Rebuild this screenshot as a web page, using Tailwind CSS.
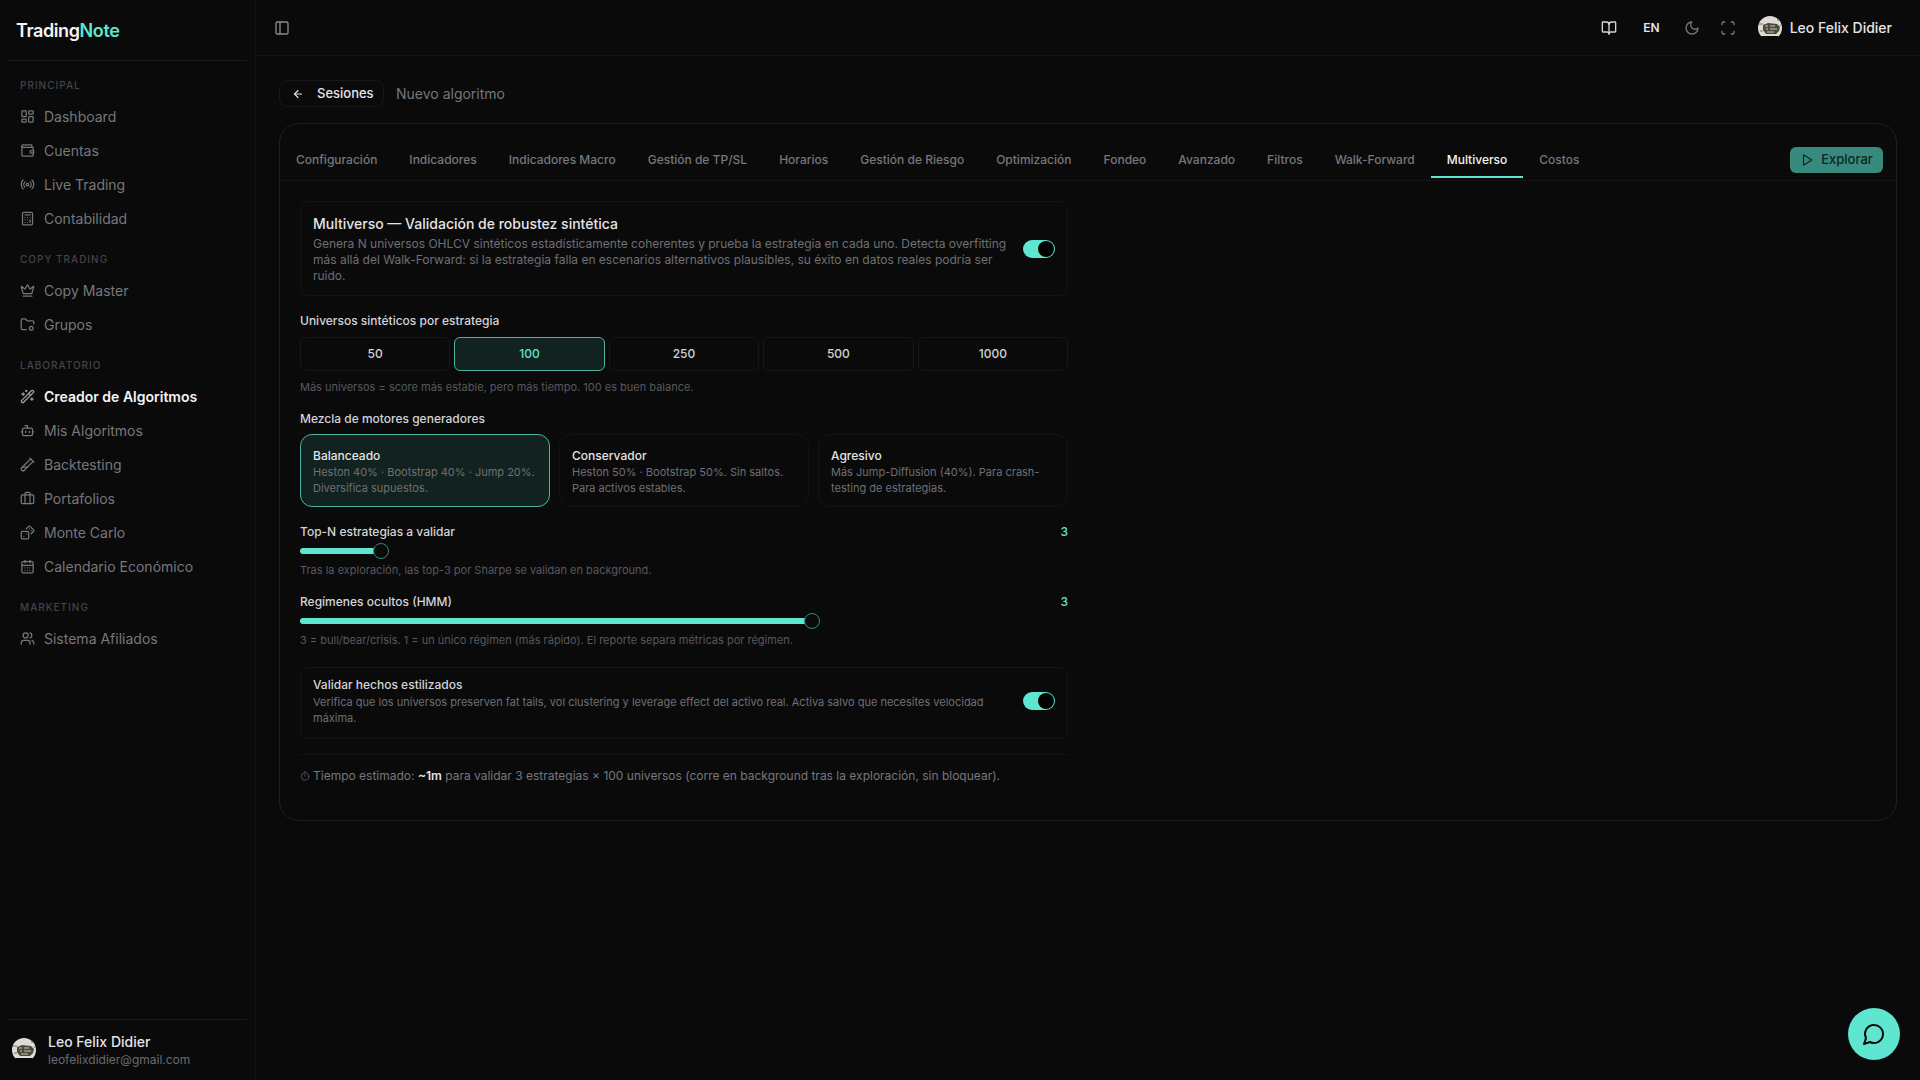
<!DOCTYPE html>
<html lang="es">
<head>
    <meta charset="UTF-8">
    <meta name="viewport" content="width=device-width, initial-scale=1.0">
    <title>TradingNote</title>
    <script src="https://cdn.jsdelivr.net/npm/@tailwindcss/browser@4"></script>
</head>
<body class="bg-[#0a0a0b] text-white font-['Inter',sans-serif] h-screen overflow-hidden flex">
    <!-- Sidebar -->
    <aside class="w-[256px] h-screen shrink-0 border-r border-[#131315] flex flex-col">
        <div class="mx-2 h-[61px] px-2 border-b border-[#1a1a1c] flex items-center">
            <span class="text-[18px] font-semibold tracking-[-0.4px] text-[#f4f4f5]">Trading<span class="text-[#5ee6d0]">Note</span></span>
        </div>
        <nav class="flex-1 pt-[16px] px-5 text-[14px] text-[#77777c]">
            <p class="h-4 leading-4 text-[10px] font-medium tracking-[1px] text-[#444448] mb-[6px]">PRINCIPAL</p>
            <a class="h-[34px] flex items-center gap-[9px]"><svg class="w-[15px] h-[15px]" viewBox="0 0 24 24" fill="none" stroke="currentColor" stroke-width="2" stroke-linecap="round" stroke-linejoin="round"><rect x="3" y="3" width="7" height="9" rx="1"/><rect x="14" y="3" width="7" height="5" rx="1"/><rect x="14" y="12" width="7" height="9" rx="1"/><rect x="3" y="16" width="7" height="5" rx="1"/></svg>Dashboard</a>
            <a class="h-[34px] flex items-center gap-[9px]"><svg class="w-[15px] h-[15px]" viewBox="0 0 24 24" fill="none" stroke="currentColor" stroke-width="2" stroke-linecap="round" stroke-linejoin="round"><path d="M19 7V4a1 1 0 0 0-1-1H5a2 2 0 0 0 0 4h15a1 1 0 0 1 1 1v4h-3a2 2 0 0 0 0 4h3a1 1 0 0 0 1-1v-2a1 1 0 0 0-1-1"/><path d="M3 5v14a2 2 0 0 0 2 2h15a1 1 0 0 0 1-1v-4"/></svg>Cuentas</a>
            <a class="h-[34px] flex items-center gap-[9px]"><svg class="w-[15px] h-[15px]" viewBox="0 0 24 24" fill="none" stroke="currentColor" stroke-width="2" stroke-linecap="round" stroke-linejoin="round"><path d="M4.9 19.1C1 15.2 1 8.8 4.9 4.9"/><path d="M7.8 16.2c-2.3-2.3-2.3-6.1 0-8.5"/><circle cx="12" cy="12" r="2"/><path d="M16.2 7.8c2.3 2.3 2.3 6.1 0 8.5"/><path d="M19.1 4.9C23 8.8 23 15.1 19.1 19"/></svg>Live Trading</a>
            <a class="h-[34px] flex items-center gap-[9px]"><svg class="w-[15px] h-[15px]" viewBox="0 0 24 24" fill="none" stroke="currentColor" stroke-width="2" stroke-linecap="round" stroke-linejoin="round"><rect x="4" y="2" width="16" height="20" rx="2"/><path d="M8 6h8"/><path d="M16 14v4"/><path d="M16 10h.01M12 10h.01M8 10h.01M12 14h.01M8 14h.01M12 18h.01M8 18h.01"/></svg>Contabilidad</a>

            <p class="h-4 leading-4 text-[10px] font-medium tracking-[1px] text-[#444448] mt-[16px] mb-[6px]">COPY TRADING</p>
            <a class="h-[34px] flex items-center gap-[9px]"><svg class="w-[15px] h-[15px]" viewBox="0 0 24 24" fill="none" stroke="currentColor" stroke-width="2" stroke-linecap="round" stroke-linejoin="round"><path d="M11.562 3.266a.5.5 0 0 1 .876 0L15.39 8.87a1 1 0 0 0 1.516.294L21.183 5.5a.5.5 0 0 1 .798.519l-2.834 10.246a1 1 0 0 1-.956.734H5.81a1 1 0 0 1-.957-.734L2.02 6.02a.5.5 0 0 1 .798-.519l4.276 3.664a1 1 0 0 0 1.516-.294z"/><path d="M5 21h14"/></svg>Copy Master</a>
            <a class="h-[34px] flex items-center gap-[9px]"><svg class="w-[15px] h-[15px]" viewBox="0 0 24 24" fill="none" stroke="currentColor" stroke-width="2" stroke-linecap="round" stroke-linejoin="round"><path d="M10 20H4a2 2 0 0 1-2-2V5a2 2 0 0 1 2-2h3.9a2 2 0 0 1 1.69.9l.81 1.2a2 2 0 0 0 1.67.9H20a2 2 0 0 1 2 2v3"/><circle cx="18" cy="18" r="3"/></svg>Grupos</a>

            <p class="h-4 leading-4 text-[10px] font-medium tracking-[1px] text-[#444448] mt-[16px] mb-[6px]">LABORATORIO</p>
            <a class="h-[34px] flex items-center gap-[9px] text-[#f4f4f5] font-semibold"><svg class="w-[15px] h-[15px] text-[#a1a1aa]" viewBox="0 0 24 24" fill="none" stroke="currentColor" stroke-width="2" stroke-linecap="round" stroke-linejoin="round"><path d="m21.64 3.64-1.28-1.28a1.21 1.21 0 0 0-1.72 0L2.36 18.64a1.21 1.21 0 0 0 0 1.72l1.28 1.28a1.2 1.2 0 0 0 1.72 0L21.64 5.36a1.2 1.2 0 0 0 0-1.72"/><path d="m14 7 3 3"/><path d="M5 6v4"/><path d="M19 14v4"/><path d="M10 2v2"/><path d="M7 8H3"/><path d="M21 16h-4"/><path d="M11 3H9"/></svg>Creador de Algoritmos</a>
            <a class="h-[34px] flex items-center gap-[9px]"><svg class="w-[15px] h-[15px]" viewBox="0 0 24 24" fill="none" stroke="currentColor" stroke-width="2" stroke-linecap="round" stroke-linejoin="round"><path d="M12 8V4H8"/><rect x="4" y="8" width="16" height="12" rx="2"/><path d="M2 14h2"/><path d="M20 14h2"/><path d="M15 13v2"/><path d="M9 13v2"/></svg>Mis Algoritmos</a>
            <a class="h-[34px] flex items-center gap-[9px]"><svg class="w-[15px] h-[15px]" viewBox="0 0 24 24" fill="none" stroke="currentColor" stroke-width="2" stroke-linecap="round" stroke-linejoin="round"><path d="M21 7 6.82 21.18a2.83 2.83 0 0 1-3.99-.01a2.83 2.83 0 0 1 0-4L17 3"/><path d="m16 2 6 6"/><path d="M12 16H4"/></svg>Backtesting</a>
            <a class="h-[34px] flex items-center gap-[9px]"><svg class="w-[15px] h-[15px]" viewBox="0 0 24 24" fill="none" stroke="currentColor" stroke-width="2" stroke-linecap="round" stroke-linejoin="round"><path d="M16 20V4a2 2 0 0 0-2-2h-4a2 2 0 0 0-2 2v16"/><rect x="2" y="6" width="20" height="14" rx="2"/></svg>Portafolios</a>
            <a class="h-[34px] flex items-center gap-[9px]"><svg class="w-[15px] h-[15px]" viewBox="0 0 24 24" fill="none" stroke="currentColor" stroke-width="2" stroke-linecap="round" stroke-linejoin="round"><rect x="2" y="10" width="12" height="12" rx="2"/><path d="m17.92 14 3.5-3.5a2.24 2.24 0 0 0 0-3l-5-4.92a2.24 2.24 0 0 0-3 0L10 6"/><path d="M6 18h.01"/><path d="M10 14h.01"/><path d="M15 6h.01"/><path d="M18 9h.01"/></svg>Monte Carlo</a>
            <a class="h-[34px] flex items-center gap-[9px]"><svg class="w-[15px] h-[15px]" viewBox="0 0 24 24" fill="none" stroke="currentColor" stroke-width="2" stroke-linecap="round" stroke-linejoin="round"><path d="M8 2v4"/><path d="M16 2v4"/><rect x="3" y="4" width="18" height="18" rx="2"/><path d="M3 10h18"/><path d="M8 14h.01M12 14h.01M16 14h.01M8 18h.01M12 18h.01M16 18h.01"/></svg>Calendario Económico</a>

            <p class="h-4 leading-4 text-[10px] font-medium tracking-[1px] text-[#444448] mt-[16px] mb-[6px]">MARKETING</p>
            <a class="h-[34px] flex items-center gap-[9px]"><svg class="w-[15px] h-[15px]" viewBox="0 0 24 24" fill="none" stroke="currentColor" stroke-width="2" stroke-linecap="round" stroke-linejoin="round"><path d="M16 21v-2a4 4 0 0 0-4-4H6a4 4 0 0 0-4 4v2"/><circle cx="9" cy="7" r="4"/><path d="M22 21v-2a4 4 0 0 0-3-3.87"/><path d="M16 3.13a4 4 0 0 1 0 7.75"/></svg>Sistema Afiliados</a>
        </nav>
        <div class="mx-2 h-[61px] border-t border-[#1a1a1c] flex items-center gap-3 px-1">
            <svg class="w-6 h-6 shrink-0" viewBox="0 0 24 24"><circle cx="12" cy="12" r="12" fill="#dcdbd4"/><path d="M5 9l5-2 9 1 3 3-1 4-3 3H8l-3-4z" fill="#4a4a3e"/><path d="M7 10h3M12 10h5M8 13h2M12 13h7M9 16h7" stroke="#c9c6b0" stroke-width="1"/><path d="M1 8h4M19 4h2M22 9h2M2 15h3" stroke="#77776a" stroke-width="1"/><path d="M3 20l3 4h12l3-4z" fill="#0a0a0b"/></svg>
            <div>
                <p class="text-[14px] leading-[18px] font-medium text-[#e4e4e7]">Leo Felix Didier</p>
                <p class="mt-[1px] text-[12px] leading-[16px] text-[#6b6b70]">leofelixdidier@gmail.com</p>
            </div>
        </div>
    </aside>

    <div class="flex-1 min-w-0 h-screen flex flex-col">
        <!-- Top bar -->
        <header class="h-[56px] shrink-0 border-b border-[#131315] flex items-center pl-[18px] pr-[28px]">
            <svg class="w-4 h-4 text-[#8a8a90]" viewBox="0 0 24 24" fill="none" stroke="currentColor" stroke-width="2" stroke-linecap="round" stroke-linejoin="round"><rect x="3" y="3" width="18" height="18" rx="2"/><path d="M9 3v18"/></svg>
            <div class="ml-auto flex items-center">
                <svg class="w-4 h-4 text-[#d4d4d8]" viewBox="0 0 24 24" fill="none" stroke="currentColor" stroke-width="2" stroke-linecap="round" stroke-linejoin="round"><path d="M12 7v14"/><path d="M3 18a1 1 0 0 1-1-1V4a1 1 0 0 1 1-1h5a4 4 0 0 1 4 4 4 4 0 0 1 4-4h5a1 1 0 0 1 1 1v13a1 1 0 0 1-1 1h-6a3 3 0 0 0-3 3 3 3 0 0 0-3-3z"/></svg>
                <span class="ml-[26px] text-[12px] font-semibold text-[#e4e4e7]">EN</span>
                <svg class="ml-[24px] w-4 h-4 text-[#77777c]" viewBox="0 0 24 24" fill="none" stroke="currentColor" stroke-width="2" stroke-linecap="round" stroke-linejoin="round"><path d="M12 3a6 6 0 0 0 9 9 9 9 0 1 1-9-9Z"/></svg>
                <svg class="ml-[20px] w-4 h-4 text-[#77777c]" viewBox="0 0 24 24" fill="none" stroke="currentColor" stroke-width="2" stroke-linecap="round" stroke-linejoin="round"><path d="M3 7V5a2 2 0 0 1 2-2h2"/><path d="M17 3h2a2 2 0 0 1 2 2v2"/><path d="M21 17v2a2 2 0 0 1-2 2h-2"/><path d="M7 21H5a2 2 0 0 1-2-2v-2"/></svg>
                <svg class="ml-[22px] w-6 h-6" viewBox="0 0 24 24"><circle cx="12" cy="12" r="12" fill="#dcdbd4"/><path d="M5 9l5-2 9 1 3 3-1 4-3 3H8l-3-4z" fill="#4a4a3e"/><path d="M7 10h3M12 10h5M8 13h2M12 13h7M9 16h7" stroke="#c9c6b0" stroke-width="1"/><path d="M1 8h4M19 4h2M22 9h2M2 15h3" stroke="#77776a" stroke-width="1"/><path d="M3 20l3 4h12l3-4z" fill="#0a0a0b"/></svg>
                <span class="ml-[8px] text-[14px] font-medium text-[#e4e4e7]">Leo Felix Didier</span>
            </div>
        </header>

        <main class="flex-1 pt-6 pl-[23px] pr-[23px]">
            <!-- Breadcrumb -->
            <div class="h-[27px] flex items-center">
                <button class="h-[27px] w-[105px] rounded-lg border border-[#17171a] flex items-center pl-3 gap-[13px] text-[13px] font-medium text-[#e4e4e7]">
                    <svg class="w-3 h-3" viewBox="0 0 24 24" fill="none" stroke="currentColor" stroke-width="2.2" stroke-linecap="round" stroke-linejoin="round"><path d="m12 19-7-7 7-7"/><path d="M19 12H5"/></svg>
                    <span class="pt-[1px]">Sesiones</span>
                </button>
                <span class="ml-3 text-[14px] text-[#77777c]">Nuevo algoritmo</span>
            </div>

            <section class="mt-4 border border-[#1e1e20] rounded-[20px]">
                <!-- Tabs -->
                <div class="h-[57px] border-b border-[#131315] flex items-end pb-[2px] relative">
                    <a class="h-[37px] px-4 flex items-center pt-[1px] text-[12px] font-medium text-[#77777c] whitespace-nowrap">Configuración</a>
                    <a class="h-[37px] px-4 flex items-center pt-[1px] text-[12px] font-medium text-[#77777c] whitespace-nowrap">Indicadores</a>
                    <a class="h-[37px] px-4 flex items-center pt-[1px] text-[12px] font-medium text-[#77777c] whitespace-nowrap">Indicadores Macro</a>
                    <a class="h-[37px] px-4 flex items-center pt-[1px] text-[12px] font-medium text-[#77777c] whitespace-nowrap">Gestión de TP/SL</a>
                    <a class="h-[37px] px-4 flex items-center pt-[1px] text-[12px] font-medium text-[#77777c] whitespace-nowrap">Horarios</a>
                    <a class="h-[37px] px-4 flex items-center pt-[1px] text-[12px] font-medium text-[#77777c] whitespace-nowrap">Gestión de Riesgo</a>
                    <a class="h-[37px] px-4 flex items-center pt-[1px] text-[12px] font-medium text-[#77777c] whitespace-nowrap">Optimización</a>
                    <a class="h-[37px] px-4 flex items-center pt-[1px] text-[12px] font-medium text-[#77777c] whitespace-nowrap">Fondeo</a>
                    <a class="h-[37px] px-4 flex items-center pt-[1px] text-[12px] font-medium text-[#77777c] whitespace-nowrap">Avanzado</a>
                    <a class="h-[37px] px-4 flex items-center pt-[1px] text-[12px] font-medium text-[#77777c] whitespace-nowrap">Filtros</a>
                    <a class="h-[37px] px-4 flex items-center pt-[1px] text-[12px] font-medium text-[#77777c] whitespace-nowrap">Walk-Forward</a>
                    <a class="h-[37px] px-4 flex items-center pt-[3px] border-b-2 border-[#5ee6d0] text-[12px] font-medium text-[#f4f4f5] whitespace-nowrap">Multiverso</a>
                    <a class="h-[37px] px-4 flex items-center pt-[1px] text-[12px] font-medium text-[#77777c] whitespace-nowrap">Costos</a>
                    <button class="absolute right-[13px] top-[23px] w-[93px] h-[26px] rounded-md bg-[#388a7e] flex items-center justify-center gap-[7px] text-[13px] font-medium text-[#0c2723]">
                        <svg class="w-[14px] h-[14px]" viewBox="0 0 24 24" fill="none" stroke="currentColor" stroke-width="2" stroke-linecap="round" stroke-linejoin="round"><polygon points="6 3 20 12 6 21 6 3"/></svg>
                        Explorar
                    </button>
                </div>

                <!-- Multiverso form -->
                <div class="w-[768px] ml-5 pt-5 pb-[36px]">
                    <div class="h-[95px] rounded-lg border border-[#141416] px-3 pt-3 flex items-start gap-3">
                        <div class="flex-1">
                            <p class="text-[14px] leading-5 font-medium text-[#e4e4e7]">Multiverso — Validación de robustez sintética</p>
                            <p class="mt-[2px] text-[12px] leading-4 text-[#6f6f74]">Genera N universos OHLCV sintéticos estadísticamente coherentes y prueba la estrategia en cada uno. Detecta overfitting más allá del Walk-Forward: si la estrategia falla en escenarios alternativos plausibles, su éxito en datos reales podría ser ruido.</p>
                        </div>
                        <div class="mt-[26px] w-8 h-[18px] rounded-full bg-[#5ee6d0] flex items-center justify-end shrink-0 pr-[1px]"><span class="w-4 h-4 rounded-full bg-black"></span></div>
                    </div>

                    <p class="mt-[17px] text-[12px] leading-4 font-medium text-[#d4d4d8]">Universos sintéticos por estrategia</p>
                    <div class="mt-[8px] grid grid-cols-5 gap-1 text-[12px] font-medium text-[#d4d4d8]">
                        <button class="h-[34px] rounded-md border border-[#17171a]">50</button>
                        <button class="h-[34px] rounded-md border border-[#4fb3a0] bg-[#122220] text-[#5ee6d0]">100</button>
                        <button class="h-[34px] rounded-md border border-[#17171a]">250</button>
                        <button class="h-[34px] rounded-md border border-[#17171a]">500</button>
                        <button class="h-[34px] rounded-md border border-[#17171a]">1000</button>
                    </div>
                    <p class="mt-2 text-[11px] leading-4 text-[#58585d]">Más universos = score más estable, pero más tiempo. 100 es buen balance.</p>

                    <p class="mt-4 text-[12px] leading-4 font-medium text-[#d4d4d8]">Mezcla de motores generadores</p>
                    <div class="mt-[7px] grid grid-cols-3 gap-[9px]">
                        <div class="h-[73px] rounded-xl border border-[#4fb3a0] bg-[#122220] px-3 pt-[13px]">
                            <p class="text-[12px] leading-4 font-medium text-[#e4e4e7]">Balanceado</p>
                            <p class="text-[11px] leading-4 text-[#6f6f74]">Heston 40% · Bootstrap 40% · Jump 20%. Diversifica supuestos.</p>
                        </div>
                        <div class="h-[73px] rounded-xl border border-[#141416] px-3 pt-[13px]">
                            <p class="text-[12px] leading-4 font-medium text-[#e4e4e7]">Conservador</p>
                            <p class="text-[11px] leading-4 text-[#6f6f74]">Heston 50% · Bootstrap 50%. Sin saltos. Para activos estables.</p>
                        </div>
                        <div class="h-[73px] rounded-xl border border-[#141416] px-3 pt-[13px]">
                            <p class="text-[12px] leading-4 font-medium text-[#e4e4e7]">Agresivo</p>
                            <p class="text-[11px] leading-4 text-[#6f6f74]">Más Jump-Diffusion (40%). Para crash-testing de estrategias.</p>
                        </div>
                    </div>

                    <div class="mt-[17px] flex justify-between text-[12px] leading-4 font-medium text-[#d4d4d8]"><span>Top-N estrategias a validar</span><span class="text-[#5ee6d0]">3</span></div>
                    <div class="mt-[3px] w-[89px] h-4 flex items-center">
                        <span class="w-[75px] h-[6px] rounded-l-full bg-[#5ee6d0]"></span>
                        <span class="w-4 h-4 -ml-[1px] rounded-full border border-[#34897c] bg-[#0a0a0b]"></span>
                    </div>
                    <p class="mt-[3px] text-[11px] leading-4 text-[#58585d]">Tras la exploración, las top-3 por Sharpe se validan en background.</p>

                    <div class="mt-4 flex justify-between text-[12px] leading-4 font-medium text-[#d4d4d8]"><span>Regímenes ocultos (HMM)</span><span class="text-[#5ee6d0]">3</span></div>
                    <div class="mt-[3px] w-[520px] h-4 flex items-center">
                        <span class="w-[505px] h-[6px] rounded-l-full bg-[#5ee6d0]"></span>
                        <span class="w-4 h-4 -ml-[1px] rounded-full border border-[#34897c] bg-[#0a0a0b]"></span>
                    </div>
                    <p class="mt-[3px] text-[11px] leading-4 text-[#58585d]">3 = bull/bear/crisis. 1 = un único régimen (más rápido). El reporte separa métricas por régimen.</p>

                    <div class="mt-[19px] h-[72px] rounded-lg border border-[#141416] px-3 pt-[9px] flex items-start gap-4">
                        <div class="flex-1">
                            <p class="mb-[1px] text-[12px] leading-4 font-medium text-[#d4d4d8]">Validar hechos estilizados</p>
                            <p class="text-[11px] leading-4 text-[#6f6f74]">Verifica que los universos preserven fat tails, vol clustering y leverage effect del activo real. Activa salvo que necesites velocidad máxima.</p>
                        </div>
                        <div class="mt-[15px] w-8 h-[18px] rounded-full bg-[#5ee6d0] flex items-center justify-end shrink-0 pr-[1px]"><span class="w-4 h-4 rounded-full bg-black"></span></div>
                    </div>

                    <div class="mt-[15px] pt-[13px] border-t border-[#141416] text-[12px] leading-4 text-[#77777c] flex items-center gap-[3px]">
                        <svg class="w-[10px] h-[10px] text-[#58585d]" viewBox="0 0 24 24" fill="none" stroke="currentColor" stroke-width="2" stroke-linecap="round" stroke-linejoin="round"><circle cx="12" cy="13" r="9"/><path d="M12 13V8"/><path d="M10 2h4"/></svg>
                        <span>Tiempo estimado: <b class="font-semibold text-[#e4e4e7]">~1m</b> para validar 3 estrategias × 100 universos (corre en background tras la exploración, sin bloquear).</span>
                    </div>
                </div>
            </section>
        </main>
    </div>

    <!-- Chat bubble -->
    <button class="fixed right-5 bottom-5 w-[52px] h-[52px] rounded-full bg-[#5ee6d0] flex items-center justify-center text-[#0a0a0b]">
        <svg class="w-6 h-6" viewBox="0 0 24 24" fill="none" stroke="currentColor" stroke-width="2" stroke-linecap="round" stroke-linejoin="round"><path d="M7.9 20A9 9 0 1 0 4 16.1L2 22Z"/></svg>
    </button>
</body>
</html>
